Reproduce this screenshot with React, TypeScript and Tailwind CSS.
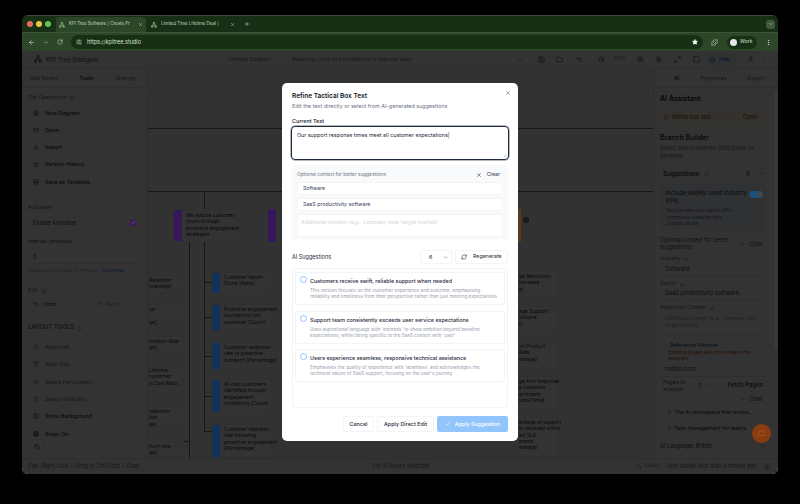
import React from "react";
import {
  AlignHorizontalSpaceAround,
  AlignLeft,
  AlignStartHorizontal,
  AlignVerticalSpaceAround,
  ArrowLeft,
  ArrowRight,
  Check,
  ChevronDown,
  ChevronLeft,
  ChevronRight,
  CircleHelp,
  Copy,
  Download,
  EllipsisVertical,
  FileText,
  Folder,
  FolderOpen,
  Grid3x3,
  History,
  Image,
  LayoutTemplate,
  Maximize2,
  MessageSquare,
  Network,
  Plus,
  Puzzle,
  Redo2,
  RefreshCw,
  RotateCw,
  Save,
  Search,
  Settings,
  SlidersHorizontal,
  Square,
  Star,
  Undo2,
  User,
  X,
  ZoomIn,
  ZoomOut,
} from "lucide-react";

const font = "font-['Inter','Liberation_Sans',sans-serif]";

type Card = { x: number; y: number; w: number; h: number; lines: string[] };

const blueCards: Card[] = [
  { x: 212, y: 271, w: 60, h: 22, lines: ["Customer health", "Score [Ratio]"] },
  { x: 212, y: 303, w: 60, h: 27, lines: ["Proactive engagement", "touchpoints per", "customer [Count]"] },
  { x: 212, y: 341, w: 60, h: 28, lines: ["Customer response", "rate to proactive", "outreach [Percentage]"] },
  { x: 212, y: 378, w: 60, h: 34, lines: ["At-risk customers", "identified through", "engagement", "monitoring [Count]"] },
  { x: 212, y: 423, w: 60, h: 34, lines: ["Customer retention", "rate following", "proactive engagement", "[Percentage]"] },
];

const leftCards: Card[] = [
  { x: 148, y: 274, w: 36, h: 18, lines: ["Retention", "rcentage]"] },
  { x: 148, y: 303, w: 36, h: 20, lines: ["ue", "", "ge]"] },
  { x: 148, y: 335, w: 36, h: 15, lines: ["ilization Rate", "ge]"] },
  { x: 148, y: 364, w: 36, h: 20, lines: ["Lifetime", "customer", "n Cost Ratio"] },
  { x: 148, y: 405, w: 36, h: 20, lines: ["retention", "tion", "ge]"] },
  { x: 148, y: 440, w: 36, h: 14, lines: ["hurn rate", "ge]"] },
];

const rightCards: Card[] = [
  { x: 518, y: 270, w: 40, h: 29, lines: ["ge Resolution", "increase", "e]"] },
  { x: 518, y: 305, w: 40, h: 28, lines: ["age Support", "Volume", "t]"] },
  { x: 518, y: 340, w: 40, h: 28, lines: ["on Product", "Rate", "entage]"] },
  { x: 518, y: 375, w: 40, h: 33, lines: ["ge first response", "e customer", "et tickets", "utes/Time]"] },
  { x: 518, y: 416, w: 40, h: 40, lines: ["entage of support", "ts resolved within", "ed SLA", "ments", "entage]"] },
];

const lines = [
  { x: 148, y: 127, w: 505, h: 1 },
  { x: 148, y: 190, w: 505, h: 1 },
  { x: 204, y: 190, w: 1, h: 240 },
  { x: 189, y: 241, w: 1, h: 220 },
  { x: 204, y: 281, w: 8, h: 1 },
  { x: 204, y: 316, w: 8, h: 1 },
  { x: 204, y: 355, w: 8, h: 1 },
  { x: 204, y: 395, w: 8, h: 1 },
  { x: 204, y: 430, w: 8, h: 1 },
  { x: 179, y: 440, w: 10, h: 1 },
];

const suggestions = [
  {
    title: "Customers receive swift, reliable support when needed",
    desc: [
      "This version focuses on the customer experience and outcome, emphasising",
      "reliability and timeliness from their perspective rather than just meeting expectations",
    ],
  },
  {
    title: "Support team consistently exceeds user service expectations",
    desc: [
      "Uses aspirational language with 'exceeds' to show ambition beyond baseline",
      "expectations, whilst being specific to the SaaS context with 'user'",
    ],
  },
  {
    title: "Users experience seamless, responsive technical assistance",
    desc: [
      "Emphasises the quality of experience with 'seamless' and acknowledges the",
      "technical nature of SaaS support, focusing on the user's journey",
    ],
  },
];

function TreeCard({ card, bar }: { card: Card; bar?: boolean }) {
  return (
    <div
      className="absolute flex rounded-[1px] border border-gray-200/60 bg-white"
      style={{ left: card.x - 148, top: card.y - 68, width: card.w, height: card.h }}
    >
      {bar && <div className="relative z-[25] w-[7px] shrink-0 rounded-[1px] bg-[#103260] blur-[0.4px]" />}
      <div className={`text-[5px] leading-[6.3px] whitespace-nowrap text-gray-800 ${bar ? "pl-[4px]" : "pl-0"} pt-[1px]`}>
        {card.lines.map((l, i) => (
          <div key={i} className="h-[6.3px]">{l}</div>
        ))}
      </div>
    </div>
  );
}

function SideRow({ icon, label, strong }: { icon: React.ReactNode; label: string; strong?: boolean }) {
  return (
    <div className={`flex h-[17.3px] items-center gap-[5px] pl-[4px] text-[5.4px] ${strong ? "font-medium text-gray-800" : "text-gray-500"}`}>
      <span className="flex w-[8px] justify-center">{icon}</span>
      {label}
    </div>
  );
}

export default function App() {
  return (
    <div className={`relative h-[504px] w-[800px] overflow-hidden bg-black pt-[15px] pl-[22px] ${font}`}>
      <div className="relative flex h-[459px] w-[756px] flex-col overflow-hidden rounded-[6px] border-t border-[#3d4a3a]">
        {/* tab strip */}
        <div className="flex h-[16px] shrink-0 items-center bg-[#173015] text-[#c9d6c4]">
          <div className="flex w-[34px] items-center gap-[3.5px] pl-[5px]">
            <span className="h-[5.5px] w-[5.5px] rounded-full bg-[#ec6a5e]" />
            <span className="h-[5.5px] w-[5.5px] rounded-full bg-[#f4bf4f]" />
            <span className="h-[5.5px] w-[5.5px] rounded-full bg-[#61c554]" />
          </div>
          <div className="flex h-[15px] w-[90px] items-center gap-[4px] self-end rounded-t-[4px] bg-[#2b4727] pl-[3px] pr-[3px] text-[4.4px] whitespace-nowrap">
            <Network size={6} className="text-[#a5d6a0]" />
            <span className="flex-1">KPI Tree Software | Create Pr</span>
            <X size={5} />
          </div>
          <div className="flex h-[15px] w-[93px] items-center gap-[4px] self-end pl-[5px] pr-[4px] text-[4.4px] whitespace-nowrap">
            <Network size={6} className="text-[#a5d6a0]" />
            <span className="flex-1">Limited Time Lifetime Deal |</span>
            <X size={5} />
          </div>
          <Plus size={6} className="ml-[5px]" />
          <div className="ml-auto mr-[3px] flex h-[9px] w-[9px] items-center justify-center rounded-[3px] bg-[#3f5a3a]">
            <ChevronDown size={6} />
          </div>
        </div>

        {/* browser toolbar */}
        <div className="flex h-[19px] shrink-0 items-center border-t border-[#3a5634] bg-[#2b4727] pl-[6px] pr-[6px] text-[#d5e0d0]">
          <ArrowLeft size={7} />
          <ArrowRight size={7} className="ml-[7px] opacity-40" />
          <RotateCw size={6} className="ml-[8px]" />
          <div className="ml-[8px] flex h-[14px] w-[632px] items-center rounded-full bg-[#173015] pl-[5px] pr-[5px] text-[5.5px]">
            <SlidersHorizontal size={6} />
            <span className="ml-[5px]">https://kpitree.studio</span>
            <Star size={6} className="ml-auto fill-white text-white" />
          </div>
          <Puzzle size={7} className="ml-[8px]" />
          <div className="ml-[9px] flex h-[13px] w-[30px] items-center gap-[3px] rounded-full bg-[#173015] pl-[3px] text-[5px]">
            <span className="h-[7px] w-[7px] rounded-full bg-[#e5e7eb]" />
            Work
          </div>
          <EllipsisVertical size={7} className="ml-auto" />
        </div>

        {/* app */}
        <div className="flex flex-1 flex-col bg-white text-gray-900">
          <div className="flex h-[18px] shrink-0 items-center border-b border-gray-200 text-gray-500">
            <div className="flex w-[206px] items-center">
              <Network size={8} className="ml-[12px] text-gray-800" />
              <span className="ml-[4px] text-[6.2px] font-medium">KPI Tree Designer</span>
            </div>
            <span className="w-[64px] text-[5.4px]">Untitled Diagram</span>
            <span className="w-[225px] text-[5.2px]">Reducing churn and profitability to improve sales</span>
            <div className="flex items-center text-gray-700">
              <ChevronDown size={6} />
              <Save size={7} className="ml-[15px]" />
              <Folder size={7} className="ml-[11px]" />
              <Undo2 size={7} className="ml-[13px]" />
              <ZoomOut size={7} className="ml-[15px]" />
              <span className="ml-[9px] text-[4.5px] text-gray-500">100%</span>
              <ZoomIn size={7} className="ml-[11px]" />
              <Settings size={7} className="ml-[11px]" />
              <Maximize2 size={7} className="ml-[12px]" />
              <Square size={7} className="ml-[12px]" />
              <div className="ml-[5px] flex h-[11px] w-[32px] items-center gap-[4px] rounded-[2px] bg-blue-50 pl-[4px] text-[5px] text-blue-700">
                <CircleHelp size={6} />
                Help
              </div>
              <User size={7} className="ml-[10px]" />
              <ChevronDown size={5} className="ml-[7px]" />
            </div>
          </div>

          <div className="flex min-h-0 flex-1">
            {/* left panel */}
            <div className="flex w-[126px] shrink-0 flex-col border-r border-gray-200 bg-white">
              <div className="flex h-[19px] shrink-0 items-center gap-[22px] border-b border-gray-200 pl-[8px] text-[5.4px] text-gray-500">
                <span>Add Boxes</span>
                <span className="font-medium text-gray-900">Tools</span>
                <span>Sharing</span>
              </div>
              <div className="pl-[6px] pr-[6px]">
                <div className="flex h-[16px] items-center gap-[3px] pt-[3px] text-[5.4px] text-gray-500">
                  File Operations <CircleHelp size={5} />
                </div>
                <SideRow icon={<FileText size={6} />} label="New Diagram" strong />
                <SideRow icon={<FolderOpen size={6} />} label="Open" strong />
                <SideRow icon={<Download size={6} />} label="Import" strong />
                <SideRow icon={<History size={6} />} label="Version History" strong />
                <SideRow icon={<LayoutTemplate size={6} />} label="Save as Template" strong />
                <div className="flex h-[24px] items-end pb-[3px] text-[5.4px] text-gray-500">Autosave</div>
                <div className="flex h-[17px] items-center justify-between pl-[5px] pr-[5px] text-[5.5px] text-gray-700">
                  Enable Autosave
                  <span className="relative z-[25] flex h-[6px] w-[6px] items-center justify-center rounded-[1px] bg-[#3d1a5e]">
                    <Check size={5} className="text-[#999]" />
                  </span>
                </div>
                <div className="flex h-[19px] items-center text-[5.4px] text-gray-600">Interval (minutes)</div>
                <div className="flex h-[14px] items-center border-b border-gray-200 pl-[5px] text-[5.5px] text-gray-700">5</div>
                <div className="flex h-[13px] items-center whitespace-nowrap text-[4.5px] text-gray-400">
                  Using current default (5 minutes). <span className="ml-[2px] text-blue-600">Customise</span>
                </div>
                <div className="flex h-[19px] items-end gap-[3px] pb-[2px] text-[5.4px] text-gray-500">
                  Edit <CircleHelp size={5} />
                </div>
                <div className="flex h-[15px] items-center pl-[5px] text-[5.4px]">
                  <Undo2 size={6} />
                  <span className="ml-[4px] text-gray-800">Undo</span>
                  <Redo2 size={6} className="ml-[39px] text-gray-400" />
                  <span className="ml-[4px] text-gray-400">Redo</span>
                </div>
                <div className="flex h-[22px] items-end gap-[3px] pb-[2px] text-[5.6px] font-medium tracking-[0.3px] text-gray-700">
                  LAYOUT TOOLS <CircleHelp size={5} className="text-gray-400" />
                </div>
                <div className="pt-[5px]">
                  <SideRow icon={<AlignLeft size={6} />} label="Align Left" />
                  <SideRow icon={<AlignStartHorizontal size={6} />} label="Align Top" />
                  <SideRow icon={<AlignHorizontalSpaceAround size={6} />} label="Space Horizontally" />
                  <SideRow icon={<AlignVerticalSpaceAround size={6} />} label="Space Vertically" />
                  <SideRow icon={<Image size={6} />} label="Show Background" strong />
                  <SideRow icon={<Grid3x3 size={6} />} label="Snap: On" strong />
                </div>
                <div className="-mt-[3px] ml-[1px] flex h-[15px] w-[15px] items-center justify-center rounded-[2px] border border-gray-200 bg-white text-gray-700">
                  <Copy size={6} />
                </div>
              </div>
            </div>

            {/* canvas */}
            <div className="relative flex-1 overflow-hidden bg-[#fbfbfb]">
              <ChevronLeft size={5} className="absolute left-[1px] top-[21px] text-gray-700" />
              <ChevronRight size={5} className="absolute right-[2px] top-[21px] text-gray-700" />
              {lines.map((l, i) => (
                <div
                  key={i}
                  className="absolute bg-gray-500"
                  style={{ left: l.x - 148, top: l.y - 68, width: l.w, height: l.h }}
                />
              ))}
              <div className="absolute left-[25px] top-[140px] flex h-[33px] w-[64px] rounded-[1px] border border-gray-200/60 bg-white">
                <div className="relative z-[25] w-[8px] shrink-0 rounded-[1px] bg-[#36175a] blur-[0.4px]" />
                <div className="pl-[4px] pt-[2px] text-[5px] leading-[6.3px] whitespace-nowrap text-gray-800">
                  We reduce customer
                  <br />
                  churn through
                  <br />
                  proactive engagement
                  <br />
                  strategies
                </div>
              </div>
              <div className="absolute left-[120px] top-[140px] z-[25] h-[33px] w-[8px] rounded-[1px] bg-[#36175a] blur-[0.4px]" />
              <div className="absolute left-[368px] top-[140px] z-[25] h-[33px] w-[5px] rounded-[1px] bg-[#5a3b20] blur-[0.4px]" />
              <Grid3x3 size={6} className="absolute left-[375px] top-[148px] text-gray-900" />
              {leftCards.map((c, i) => (
                <TreeCard key={i} card={c} />
              ))}
              {blueCards.map((c, i) => (
                <TreeCard key={i} card={c} bar />
              ))}
              {rightCards.map((c, i) => (
                <TreeCard key={i} card={c} />
              ))}
            </div>

            {/* right panel */}
            <div className="relative flex w-[125px] shrink-0 flex-col overflow-hidden border-l border-gray-200 bg-white">
              <div className="absolute right-[1px] top-[22px] z-[25] h-[258px] w-[2px] rounded-full bg-[#3d3d3d]" />
              <div className="flex h-[19px] shrink-0 items-center gap-[21px] border-b border-gray-200 pl-[20px] text-[5.4px] text-gray-500">
                <span className="font-medium text-gray-900">AI</span>
                <span>Properties</span>
                <span>Export</span>
              </div>
              <div className="pl-[6px] pr-[13px] pt-[6px]">
                <div className="text-[7px] font-semibold">AI Assistant</div>
                <div className="mt-[6px] flex h-[14px] items-center gap-[3px] rounded-[2px] bg-amber-50 pl-[4px] text-[5.5px] text-amber-800">
                  <MessageSquare size={5} />
                  Refine box text
                  <span className="ml-auto mr-[3px] border-l border-amber-100 pl-[5px] pr-[5px]">Open</span>
                </div>
                <div className="mt-[8px] text-[7px] font-medium">Branch Builder</div>
                <div className="mt-[1px] text-[5.5px] leading-[8px] text-gray-500">
                  Select and customise child boxes to generate
                </div>
                <div className="mt-[6px] flex h-[14px] items-center pl-[3px] text-[6px] font-medium">
                  Suggestions:
                  <CircleHelp size={5} className="ml-[3px] text-gray-400" />
                  <span className="ml-auto mr-[10px] font-normal">6</span>
                  <ChevronDown size={5} />
                </div>
                <div className="mt-[4px] flex h-[46px] rounded-[2px] bg-blue-50 pl-[6px] pr-[2px] pt-[5px]">
                  <div className="flex-1">
                    <div className="text-[5.9px] leading-[8px] text-gray-800">Include widely-used industry KPIs</div>
                    <div className="mt-[2px] w-[68px] text-[5px] leading-[6.5px] text-gray-500">
                      Recognises and injects KPIs commonly used for this context alone
                    </div>
                  </div>
                  <div className="relative z-[25] mt-[2px] flex h-[7px] w-[14px] shrink-0 items-center justify-end rounded-full bg-[#1d4f7d] pr-[1px] blur-[0.3px]">
                    <span className="h-[5px] w-[5px] rounded-full bg-[#444]" />
                  </div>
                </div>
                <div className="mt-[7px] flex items-center text-[5.5px] leading-[7px] text-gray-600">
                  <span className="w-[75px]">Optional context for better suggestions:</span>
                  <X size={5} className="ml-auto" />
                  <span className="ml-[4px] mr-[2px]">Clear</span>
                </div>
                <div className="mt-[3px] flex h-[9px] items-center gap-[3px] text-[5.4px] text-gray-500">
                  Industry <CircleHelp size={4} />
                </div>
                <div className="flex h-[14px] items-center border-b border-gray-200 pl-[5px] text-[5.8px] text-gray-700">Software</div>
                <div className="flex h-[10px] items-end gap-[3px] text-[5.4px] text-gray-500">
                  Sector <CircleHelp size={4} />
                </div>
                <div className="flex h-[14px] items-center border-b border-gray-200 pl-[5px] text-[5.8px] text-gray-700">
                  SaaS productivity software
                </div>
                <div className="flex h-[10px] items-end gap-[3px] text-[5.4px] text-gray-500">
                  Additional Context <CircleHelp size={4} />
                </div>
                <div className="mt-[4px] h-[20px] border-b border-gray-200 pl-[5px] text-[5px] leading-[6.5px] text-gray-400">
                  Additional context (e.g., company size, target market)
                </div>
                <div className="mt-[6px] pl-[10px] text-[5.4px] text-gray-700">Reference Website</div>
                <div className="pl-[8px] text-[5px] leading-[6px] text-amber-700">
                  Existing pages will cost a few extra seconds
                </div>
                <div className="mt-[2px] flex h-[14px] items-center border-b border-gray-200 pl-[5px] text-[5.8px] text-gray-700">
                  notion.com
                </div>
                <div className="mt-[2px] flex items-center text-[5.4px] leading-[6.5px] text-gray-600">
                  <span className="w-[28px] pl-[3px]">Pages to analyse:</span>
                  <span className="ml-[10px]">3</span>
                  <ChevronDown size={5} className="ml-[6px]" />
                  <span className="ml-auto mr-[2px] text-[6px] font-medium text-gray-800">Fetch Pages</span>
                </div>
                <div className="mt-[3px] flex items-center justify-end gap-[4px] pr-[2px] text-[5.5px] text-gray-600">
                  <X size={5} />
                  Clear
                </div>
                <div className="mt-[5px] flex items-center gap-[3px] pl-[8px] text-[5.4px] text-gray-800">
                  <span className="h-[3px] w-[3px] rounded-full border border-gray-400" />
                  The AI workspace that works...
                </div>
                <div className="mt-[8px] flex items-center gap-[3px] pl-[8px] text-[5.4px] text-gray-800">
                  <span className="h-[3px] w-[3px] rounded-full border border-gray-400" />
                  Task management for teams
                </div>
                <div className="mt-[9px] flex items-center text-[5.5px] text-gray-700">
                  AI Language: British
                  <ChevronDown size={5} className="ml-auto" />
                </div>
              </div>
            </div>
          </div>

          {/* status bar */}
          <div className="flex h-[16px] shrink-0 items-center border-t border-gray-200 pl-[6px] pr-[8px] text-[5.5px] text-gray-500">
            <span className="w-[344px]">Pan: Right-click + Drag or Ctrl/Cmd + Drag</span>
            <span className="w-[264px]">1 of 41 boxes selected</span>
            <Search size={6} />
            <span className="ml-[2px] w-[23px] text-[4.5px]">Locked</span>
            <span>Last saved: less than a minute ago</span>
            <Settings size={6} className="ml-auto" />
          </div>
        </div>

        {/* dimmed backdrop */}
        <div className="absolute inset-x-0 bottom-0 top-[35px] z-20 bg-black/80 backdrop-blur-[0.5px]" />
        <div className="absolute left-[730px] top-[408px] z-[25] flex h-[19px] w-[19px] items-center justify-center rounded-full bg-[#8a3c0e] text-[#b0622a]">
          <MessageSquare size={7} />
        </div>
      </div>

      {/* modal */}
      <div className="absolute left-[282px] top-[83px] z-30 flex h-[358px] w-[236px] flex-col rounded-[5px] bg-white pl-[10px] pr-[10px] pt-[8px] text-gray-900">
        <X size={6} className="absolute right-[7px] top-[7px] text-gray-600" />
        <div className="text-[6.5px] font-semibold leading-[11px]">Refine Tactical Box Text</div>
        <div className="text-[5.4px] leading-[8px] text-gray-500">Edit the text directly or select from AI-generated suggestions</div>
        <div className="mt-[7px] text-[5.4px] font-medium leading-[8px]">Current Text</div>
        <div className="relative -mx-[1px] mt-[1px] h-[34px] shrink-0 rounded-[4px] border border-gray-800 pl-[5px] pt-[4px] text-[5.35px] leading-[8px] text-gray-800 shadow-[0_0_0_0.5px_#6b7280]">
          Our support response times meet all customer expectations|
          <svg viewBox="0 0 4 4" className="absolute bottom-[1px] right-[1px] h-[4px] w-[4px] text-gray-400">
            <path d="M0.5 3.5 L3.5 0.5 M2 3.5 L3.5 2" stroke="currentColor" strokeWidth="0.5" />
          </svg>
        </div>
        <div className="mt-[5px] flex h-[75px] shrink-0 flex-col gap-[3px] rounded-[3px] bg-gray-50 pl-[5px] pr-[5px] pt-[5px]">
          <div className="flex h-[9px] items-center pr-[3px] text-[4.8px] text-gray-500">
            Optional context for better suggestions:
            <X size={6} className="ml-auto text-gray-800" />
            <span className="ml-[5px] text-[5.3px] text-gray-700">Clear</span>
          </div>
          <div className="flex h-[13px] items-center rounded-[2px] border border-gray-100 bg-white pl-[5px] text-[5.2px] text-gray-700">Software</div>
          <div className="flex h-[13px] items-center rounded-[2px] border border-gray-100 bg-white pl-[5px] text-[5.3px] text-gray-700">SaaS productivity software</div>
          <div className="h-[23px] rounded-[2px] border border-gray-100 bg-white pl-[3px] pt-[3px] text-[5.4px] leading-[8px] text-gray-300">
            Additional context (e.g., company size, target market)
          </div>
        </div>
        <div className="mt-[10px] flex h-[14px] shrink-0 items-center text-[5.5px] text-gray-800">
          AI Suggestions
          <div className="ml-auto flex h-[14px] w-[32px] items-center justify-between rounded-[2px] border border-gray-100 pl-[8px] pr-[3px] text-[5.4px]">
            6 <ChevronDown size={5} />
          </div>
          <div className="ml-[3px] flex h-[14px] w-[53px] items-center gap-[6px] rounded-[2px] border border-gray-100 pl-[5px] text-[5.3px]">
            <RefreshCw size={6} />
            Regenerate
          </div>
        </div>
        <div className="mt-[4px] flex h-[140px] shrink-0 flex-col gap-[5.5px] rounded-[2px] border border-gray-100 pl-[2px] pr-[2px] pt-[3px]">
          {suggestions.map((s) => (
            <div key={s.title} className="flex h-[33px] shrink-0 rounded-[2px] border border-gray-100 pl-[4px] pt-[3px]">
              <span className="h-[7px] w-[7px] shrink-0 rounded-full border border-blue-300" />
              <div className="ml-[3px] whitespace-nowrap">
                <div className="mt-[1px] text-[5.4px] font-medium leading-[8px] text-gray-800">{s.title}</div>
                <div className="mt-[2px] text-[4.7px] leading-[6.4px] text-gray-400">
                  {s.desc[0]}
                  <br />
                  {s.desc[1]}
                </div>
              </div>
            </div>
          ))}
        </div>
        <div className="mt-[8px] flex h-[16px] shrink-0 justify-end gap-[3px] text-[5.4px] font-medium text-gray-800">
          <div className="flex w-[31px] items-center justify-center rounded-[2px] border border-gray-100">Cancel</div>
          <div className="flex w-[57px] items-center justify-center rounded-[2px] border border-gray-100">Apply Direct Edit</div>
          <div className="flex w-[71px] items-center justify-center gap-[4px] rounded-[2px] bg-[#93c5fd] text-white">
            <Check size={6} />
            Apply Suggestion
          </div>
        </div>
      </div>
    </div>
  );
}
